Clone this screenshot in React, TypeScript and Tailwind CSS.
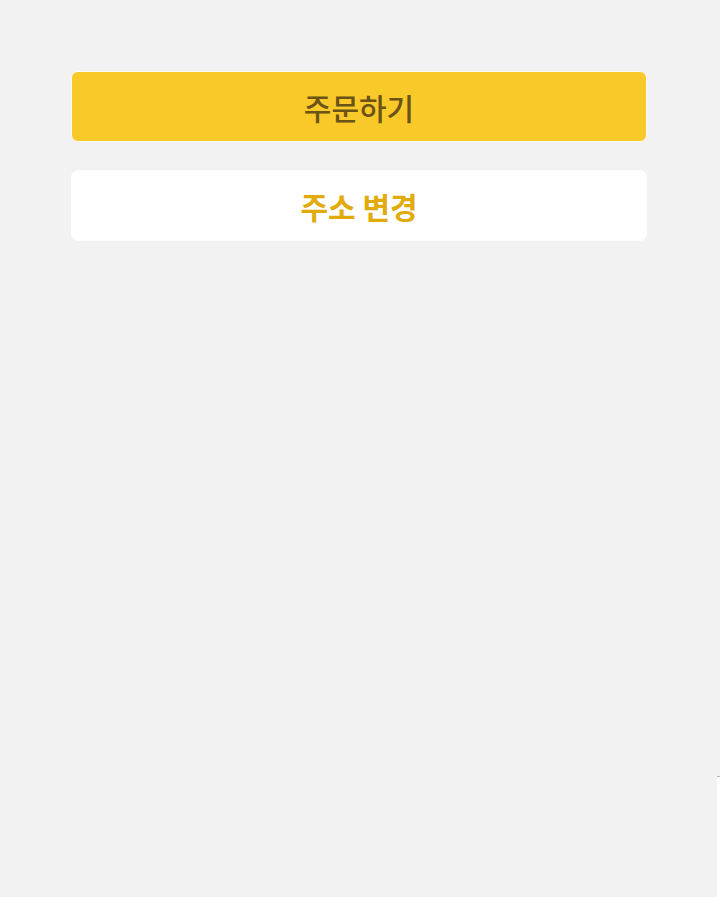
import React from "react";

export default function App() {
  return (
    <div
      className="relative w-[720px] h-[897px] bg-[#f2f2f2] overflow-hidden"
      style={{ fontFamily: '"Noto Sans CJK KR", "Noto Sans", sans-serif' }}
    >
      <div className="flex flex-col gap-[28px] pt-[71px] pl-[71px] pr-[73px]">
        <button className="h-[71px] w-full rounded-[7px] border border-[#fbfbf5] bg-[#f8c928] text-[30px] leading-none font-medium text-[#6b5317] flex items-center justify-center">
          주문하기
        </button>
        <button className="h-[71px] w-full rounded-[7px] border border-[#fdfdfd] bg-white text-[30px] leading-none font-bold text-[#e1ab0c] flex items-center justify-center">
          주소 변경
        </button>
      </div>
      <div className="absolute left-[717px] top-[776px] w-[3px] h-[121px] bg-white border-t border-[#b5b5b5]" />
    </div>
  );
}
